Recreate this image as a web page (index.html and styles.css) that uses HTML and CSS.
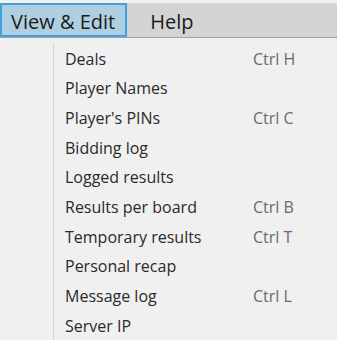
FILE: index.html
```html
<!DOCTYPE html>
<html>

<head>
    <title>Menu</title>
    <link rel="stylesheet" href="styles.css">
</head>

<body>
    <div class="titlestrip"></div>
    <div class="menubar">
        <div class="menubar-item active">View &amp; Edit</div>
        <div class="menubar-item">Help</div>
    </div>
    <div class="dropdown">
        <ul class="menu-list">
            <li class="menu-row"><span class="label">Deals</span><span class="shortcut">Ctrl H</span></li>
            <li class="menu-row"><span class="label">Player Names</span></li>
            <li class="menu-row"><span class="label">Player's PINs</span><span class="shortcut">Ctrl C</span></li>
            <li class="menu-row"><span class="label">Bidding log</span></li>
            <li class="menu-row"><span class="label">Logged results</span></li>
            <li class="menu-row"><span class="label">Results per board</span><span class="shortcut">Ctrl B</span></li>
            <li class="menu-row"><span class="label">Temporary results</span><span class="shortcut">Ctrl T</span></li>
            <li class="menu-row"><span class="label">Personal recap</span></li>
            <li class="menu-row"><span class="label">Message log</span><span class="shortcut">Ctrl L</span></li>
            <li class="menu-row"><span class="label">Server IP</span></li>
        </ul>
    </div>
</body>

</html>
```

FILE: styles.css
```css
body {
    margin: 0;
    padding: 0;
    background-color: #f0f0f0;
    font-family: "Open Sans", "Noto Sans", sans-serif;
    color: #2a2a2a;
}

.titlestrip {
    height: 3px;
    background-color: #f6f1ed;
}

.menubar {
    display: flex;
    height: 34px;
    background-color: #d4d4d4;
    border-bottom: 1px solid #a3a3a3;
}

.menubar-item {
    display: flex;
    align-items: center;
    padding: 3px 11px 0 23px;
    font-size: 20px;
    color: #1a1a1a;
}

.menubar-item.active {
    background-color: #aecfe1;
    border: 2px solid #3ea2de;
    padding: 3px 10px 0 9px;
}

.dropdown {
    padding: 6px 0 5px 53px;
}

.menu-list {
    list-style: none;
    margin: 0;
    padding: 0 0 0 11px;
    border-left: 1px solid #d3d3d3;
}

.menu-row {
    display: grid;
    grid-template-columns: 188px auto;
    align-items: center;
    height: 29.67px;
    font-size: 16px;
}

.shortcut {
    color: #6a6a6a;
}
```
